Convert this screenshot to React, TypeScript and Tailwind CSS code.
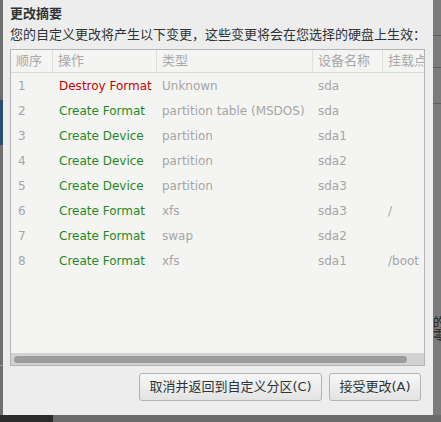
import React from "react";

const rows = [
  { n: "1", op: "Destroy Format", red: true, type: "Unknown", dev: "sda", mnt: "" },
  { n: "2", op: "Create Format", type: "partition table (MSDOS)", dev: "sda", mnt: "" },
  { n: "3", op: "Create Device", type: "partition", dev: "sda1", mnt: "" },
  { n: "4", op: "Create Device", type: "partition", dev: "sda2", mnt: "" },
  { n: "5", op: "Create Device", type: "partition", dev: "sda3", mnt: "" },
  { n: "6", op: "Create Format", type: "xfs", dev: "sda3", mnt: "/" },
  { n: "7", op: "Create Format", type: "swap", dev: "sda2", mnt: "" },
  { n: "8", op: "Create Format", type: "xfs", dev: "sda1", mnt: "/boot" },
];

const font = { fontFamily: '"DejaVu Sans", "Noto Sans CJK SC", sans-serif' };
const cols = "grid grid-cols-[42px_104px_156px_70px_1fr]";

export default function App() {
  return (
    <div className="w-[441px] h-[422px] overflow-hidden flex flex-col bg-[#6b6b6b]" style={font}>
      <div className="flex h-[415px]">
        {/* left strip */}
        <div className="w-[3px] flex flex-col bg-[#6e6e6e]">
          <div className="h-[100px]" />
          <div className="h-[45px] bg-[#2b4d70]" />
          <div className="h-[220px]" />
          <div className="h-[1px] bg-[#9a9a9a]" />
        </div>
        {/* dialog */}
        <div className="w-[430px] bg-[#ededed] flex flex-col pl-[7px] pr-[8px] text-[#2e3436]">
          <div className="pt-[6px] text-[13px] leading-[16px] font-bold">更改摘要</div>
          <div className="mt-[5px] text-[13px] leading-[16px] whitespace-nowrap">
            您的自定义更改将产生以下变更，这些变更将会在您选择的硬盘上生效：
          </div>
          <div className="mt-[6px] h-[317px] border border-[#b4b4b4] bg-[#f4f4f2] flex flex-col overflow-hidden">
            <div className={`${cols} h-[23px] border-b border-[#dadada] text-[13px] text-[#a9a9a9] items-center whitespace-nowrap overflow-hidden`}>
              <div className="pl-[5px] h-full flex items-center border-r border-[#dedede]">顺序</div>
              <div className="pl-[5px] h-full flex items-center border-r border-[#dedede]">操作</div>
              <div className="pl-[5px] h-full flex items-center border-r border-[#dedede]">类型</div>
              <div className="pl-[5px] h-full flex items-center border-r border-[#dedede]">设备名称</div>
              <div className="pl-[5px] h-full flex items-center overflow-hidden">挂载点</div>
            </div>
            {rows.map((r) => (
              <div key={r.n} className={`${cols} h-[25px] items-center text-[12px] text-[#a6a6a6] whitespace-nowrap`}>
                <div className="pl-[7px]">{r.n}</div>
                <div className={`pl-[6px] ${r.red ? "text-[#cc0000]" : "text-[#1f8a24]"}`}>{r.op}</div>
                <div className="pl-[5px]">{r.type}</div>
                <div className="pl-[5px]">{r.dev}</div>
                <div className="pl-[5px] overflow-hidden">{r.mnt}</div>
              </div>
            ))}
            <div className="flex-1" />
            <div className="h-[12px] bg-[#d2d2d2] flex items-center px-[3px]">
              <div className="w-[393px] h-[7px] rounded-full bg-[#9c9c9c]" />
            </div>
          </div>
          <div className="mt-[7px] mr-[4px] flex justify-end gap-[7px] text-[13px]">
            <button className="h-[28px] w-[183px] rounded-[3px] border border-[#b3b3b3] bg-gradient-to-b from-[#f7f7f7] to-[#e3e3e3] text-[#2e3436] flex items-center justify-center">
              取消并返回到自定义分区(C)
            </button>
            <button className="h-[28px] w-[92px] rounded-[3px] border border-[#b3b3b3] bg-gradient-to-b from-[#f7f7f7] to-[#e3e3e3] text-[#2e3436] flex items-center justify-center">
              接受更改(A)
            </button>
          </div>
        </div>
        {/* right strip */}
        <div className="w-[8px] bg-[#7b7b7b] flex flex-col overflow-hidden">
          <div className="h-[35px]" />
          <div className="h-[1px] bg-[#5f5f5f]" />
          <div className="h-[31px]" />
          <div className="h-[1px] bg-[#5f5f5f]" />
          <div className="h-[35px]" />
          <div className="h-[1px] bg-[#5f5f5f]" />
          <div className="h-[213px]" />
          <div className="text-[12px] leading-[13px] text-[#222] whitespace-nowrap">的</div>
          <div className="text-[12px] leading-[13px] text-[#222] whitespace-nowrap">零</div>
        </div>
      </div>
      <div className="flex h-[7px]">
        <div className="w-[53px] bg-[#2b2b2b]" />
        <div className="flex-1 bg-[#6b6b6b]" />
      </div>
    </div>
  );
}
